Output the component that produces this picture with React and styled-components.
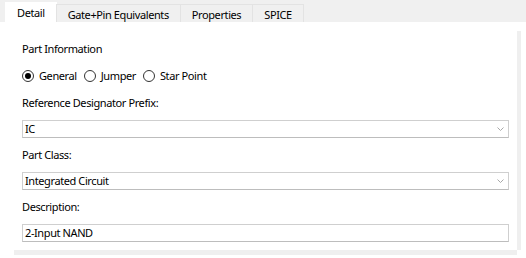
import React from 'react'
import styled, { createGlobalStyle } from 'styled-components'

const Global = createGlobalStyle`
  html, body {
    margin: 0;
    padding: 0;
    background: #ffffff;
  }
  body {
    font-family: 'Segoe UI', 'Noto Sans', sans-serif;
    font-size: 11px;
    letter-spacing: -0.4px;
    color: #000;
  }
`

const Page = styled.div`
  width: 526px;
  height: 258px;
  display: flex;
  flex-direction: column;
  background: #fff;
  overflow: hidden;
`

const TabStrip = styled.div`
  height: 22px;
  flex: none;
  display: flex;
  align-items: flex-end;
  padding-left: 5px;
  background: #f0f0f0;
`

const Tab = styled.div`
  height: ${p => (p.active ? '20px' : '18px')};
  box-sizing: border-box;
  padding: 0 11px;
  display: flex;
  align-items: center;
  padding-top: ${p => (p.active ? '0' : '2px')};
  line-height: 16px;
  background: ${p => (p.active ? '#ffffff' : '#f0f0f0')};
  border: 1px solid ${p => (p.active ? '#ffffff' : '#e3e3e3')};
  border-bottom: none;
  margin-left: ${p => (p.active ? '0' : '-1px')};
`

const Body = styled.div`
  flex: 1;
  display: grid;
  grid-template-columns: 1fr 4px;
  grid-template-rows: 1fr 5px;
  padding: 0 5px 3px 0;
`

const Form = styled.div`
  display: flex;
  flex-direction: column;
  gap: 9px;
  padding: 19px 8px 0 22px;
`

const Heading = styled.div`
  line-height: 16px;
`

const RadioRow = styled.div`
  display: flex;
  align-items: center;
  gap: 7px;
  line-height: 16px;
  margin: 2px 0 2px;
`

const RadioOption = styled.label`
  display: flex;
  align-items: center;
  gap: 5px;
`

const RadioDot = styled.span`
  width: 12px;
  height: 12px;
  box-sizing: border-box;
  border-radius: 50%;
  border: 1px solid #333;
  display: flex;
  align-items: center;
  justify-content: center;
  &::after {
    content: '';
    width: 6px;
    height: 6px;
    border-radius: 50%;
    background: #000;
    display: ${p => (p.checked ? 'block' : 'none')};
  }
`

const Field = styled.div`
  display: flex;
  flex-direction: column;
  gap: 9px;
`

const Label = styled.div`
  line-height: 16px;
`

const Box = styled.div`
  height: 18px;
  box-sizing: border-box;
  border: 1px solid #cfcfcf;
  border-bottom-color: #bdbdbd;
  display: flex;
  align-items: center;
  padding: 0 4px 0 2px;
  line-height: 16px;
`

const BoxText = styled.span`
  flex: 1;
`

const VBar = styled.div`
  margin-top: 9px;
  background: #efefef;
`

const HBar = styled.div`
  margin-left: 14px;
  background: #efefef;
`

const Chevron = () => (
  <svg width="7" height="4" viewBox="0 0 7 4">
    <path d="M0.5 0.5 L3.5 3.5 L6.5 0.5" fill="none" stroke="#a8a8a8" strokeWidth="1" />
  </svg>
)

const tabs = ['Detail', 'Gate+Pin Equivalents', 'Properties', 'SPICE']

const Radio = ({ checked, children }) => (
  <RadioOption>
    <RadioDot checked={checked} />
    {children}
  </RadioOption>
)

export default function App() {
  return (
    <Page>
      <Global />
      <TabStrip>
        {tabs.map((t, i) => (
          <Tab key={t} active={i === 0}>
            {t}
          </Tab>
        ))}
      </TabStrip>
      <Body>
        <Form>
          <Heading>Part Information</Heading>
          <RadioRow>
            <Radio checked>General</Radio>
            <Radio>Jumper</Radio>
            <Radio>Star Point</Radio>
          </RadioRow>
          <Field>
            <Label>Reference Designator Prefix:</Label>
            <Box>
              <BoxText>IC</BoxText>
              <Chevron />
            </Box>
          </Field>
          <Field>
            <Label>Part Class:</Label>
            <Box>
              <BoxText>Integrated Circuit</BoxText>
              <Chevron />
            </Box>
          </Field>
          <Field>
            <Label>Description:</Label>
            <Box>
              <BoxText>2-Input NAND</BoxText>
            </Box>
          </Field>
        </Form>
        <VBar />
        <HBar />
      </Body>
    </Page>
  )
}
